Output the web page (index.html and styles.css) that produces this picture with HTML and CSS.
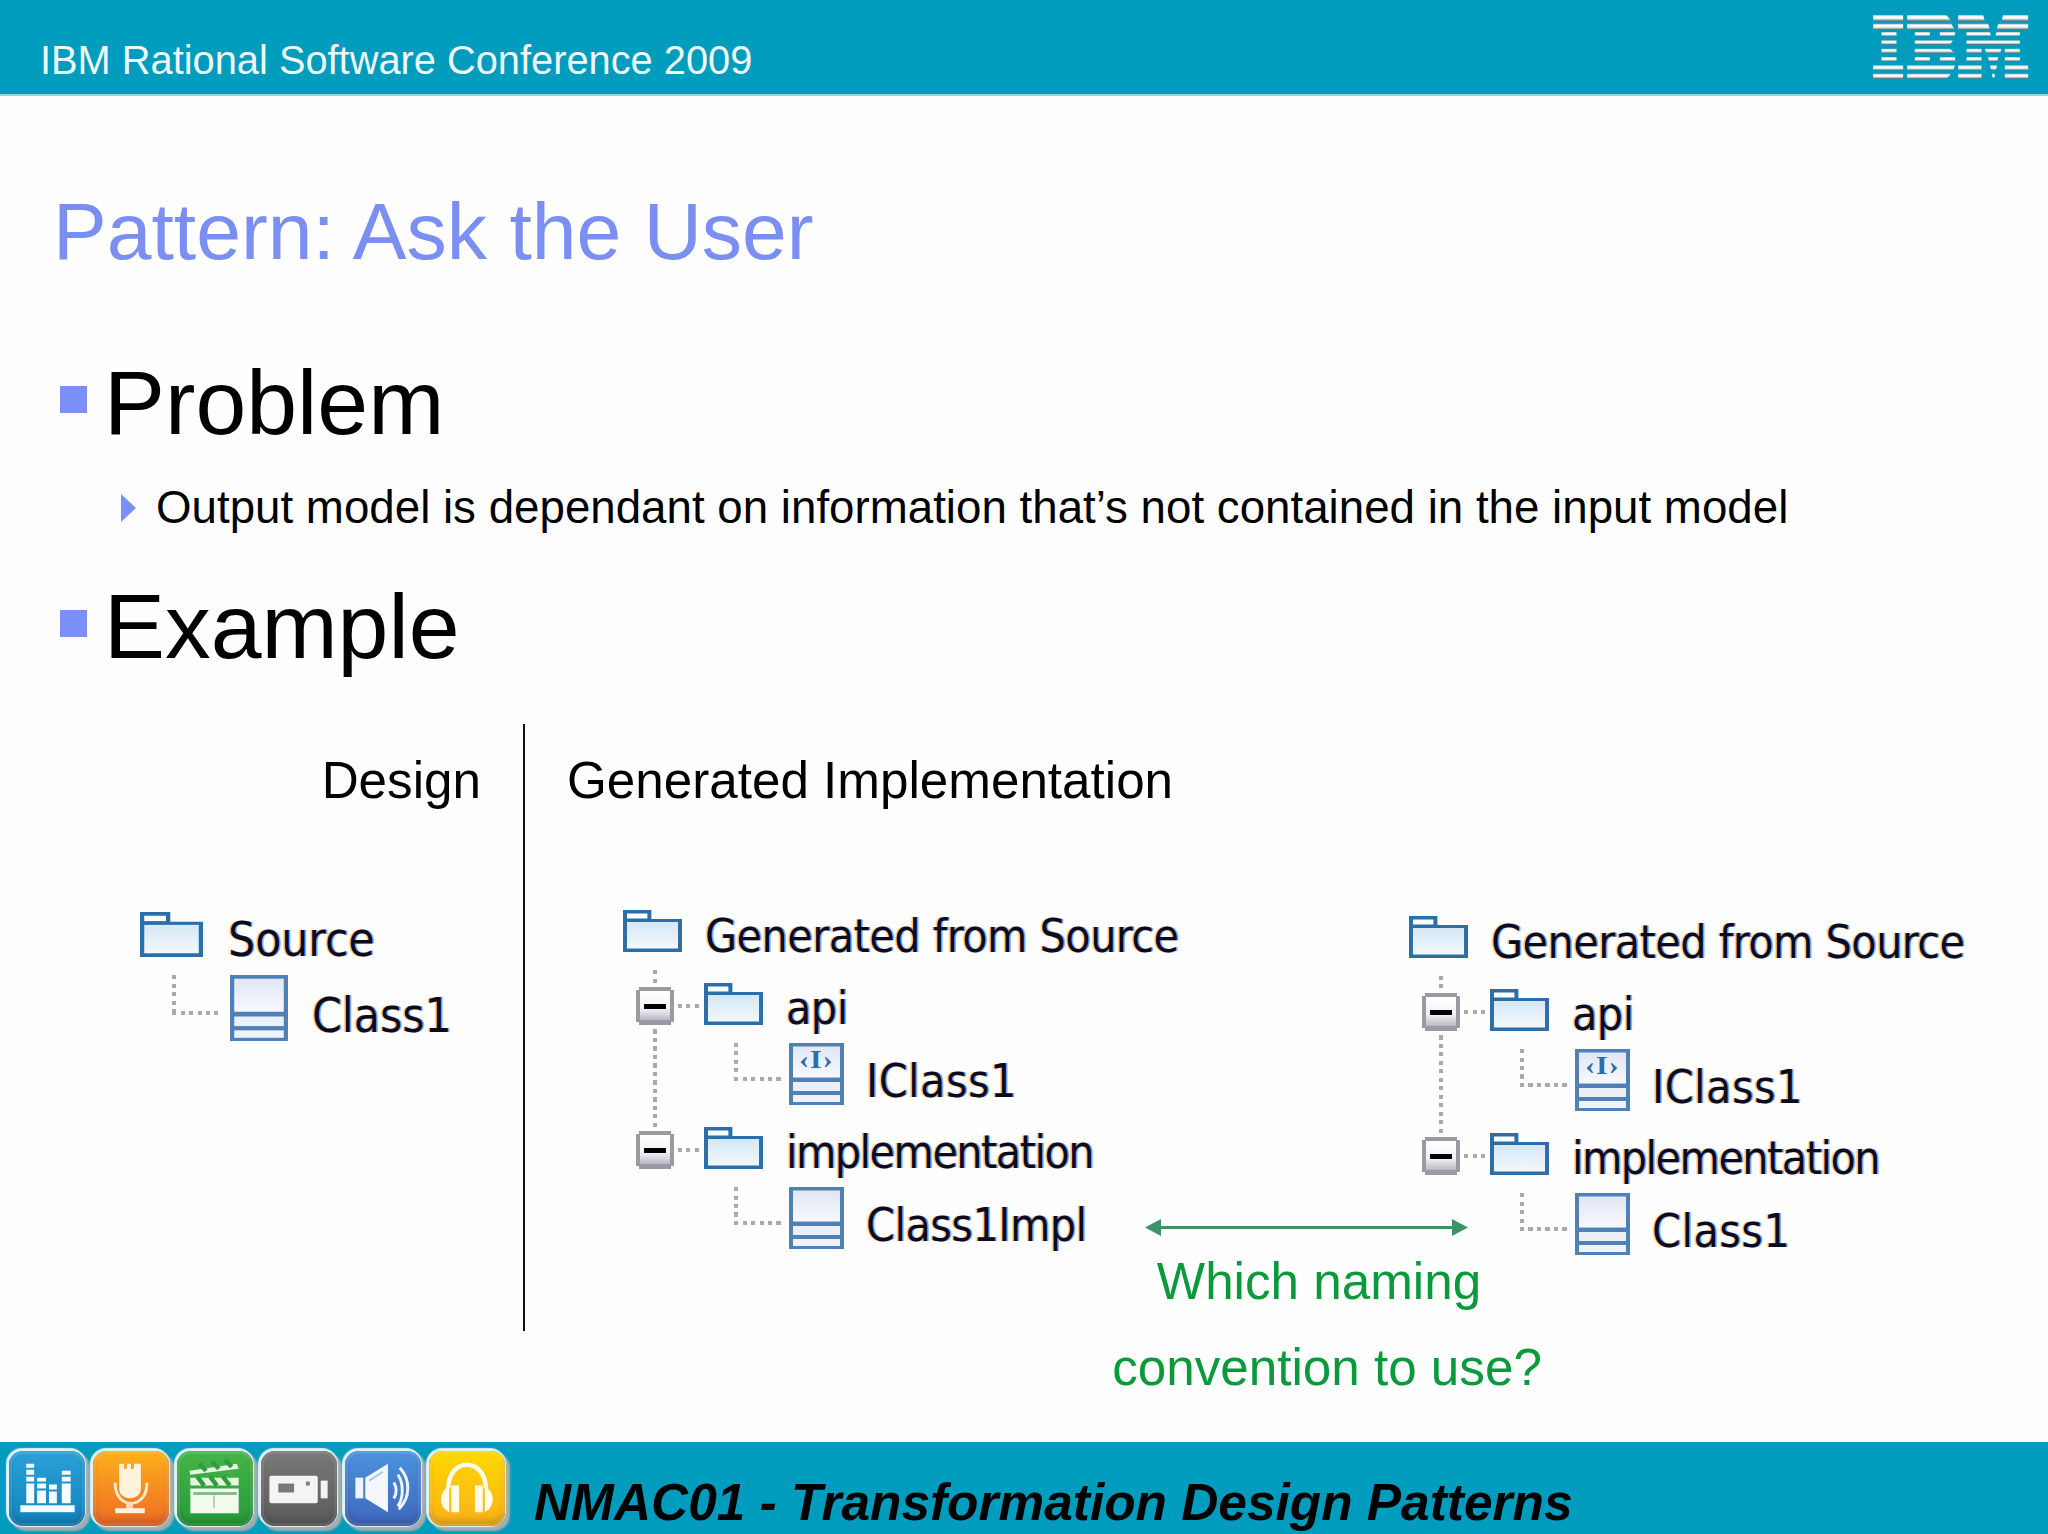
FILE: index.html
```html
<!DOCTYPE html>
<html lang="en">
<head>
<meta charset="utf-8">
<title>Pattern: Ask the User</title>
<link rel="stylesheet" href="styles.css">
</head>
<body>
<svg class="defs" width="0" height="0" aria-hidden="true">
  <defs>
    <linearGradient id="folderFill" x1="0" y1="0" x2="0" y2="1"><stop offset="0" stop-color="#d6e7f6"/><stop offset="1" stop-color="#f3f8fd"/></linearGradient>
    <linearGradient id="classFill" x1="0" y1="0" x2="0" y2="1"><stop offset="0" stop-color="#e1e6f3"/><stop offset="1" stop-color="#f8f9fe"/></linearGradient>
    <linearGradient id="minusFill" x1="0" y1="0" x2="0" y2="1"><stop offset="0" stop-color="#ffffff"/><stop offset=".6" stop-color="#f3f3f6"/><stop offset="1" stop-color="#b9b9c2"/></linearGradient>
    <linearGradient id="stripe" x1="0" y1="0" x2="0" y2="1"><stop offset="0" stop-color="#aebcc0"/><stop offset=".3" stop-color="#ffffff"/><stop offset=".6" stop-color="#eaf2f4"/><stop offset="1" stop-color="#5f6f74"/></linearGradient>
    <symbol id="folder" viewBox="0 0 52 42" preserveAspectRatio="none">
      <path d="M0 0H25V9H52V42H0Z" fill="#2b6ea8"/>
      <rect x="3.500" y="3.500" width="18" height="5" fill="#fff"/>
      <rect x="3.500" y="12" width="45" height="26.500" fill="url(#folderFill)"/>
    </symbol>
    <symbol id="class" viewBox="0 0 48 62" preserveAspectRatio="none">
      <rect width="48" height="62" fill="#4f80b6"/>
      <rect x="3.500" y="3.500" width="41" height="31" fill="url(#classFill)"/>
      <rect x="3.500" y="39" width="41" height="9" fill="#eaf0fa"/>
      <rect x="3.500" y="52" width="41" height="7" fill="#f0f3fb"/>
    </symbol>
    <symbol id="iface" viewBox="0 0 48 62" preserveAspectRatio="none">
      <rect width="48" height="62" fill="#4f80b6"/>
      <rect x="3.500" y="3.500" width="41" height="31" fill="url(#classFill)"/>
      <rect x="3.500" y="39" width="41" height="9" fill="#eaf0fa"/>
      <rect x="3.500" y="52" width="41" height="7" fill="#f0f3fb"/>
      <text x="24" y="25" class="iface-mark">‹I›</text>
    </symbol>
    <symbol id="minus" viewBox="0 0 38 38" preserveAspectRatio="none">
      <rect x="3" width="32" height="38" fill="#9a9aa5"/>
      <rect y="3" width="38" height="32" fill="#9a9aa5"/>
      <rect x="4" y="4" width="30" height="29" fill="url(#minusFill)"/>
      <rect x="8" y="17" width="22" height="5" fill="#000"/>
    </symbol>
  </defs>
</svg>

<div class="slide">
  <header class="topbar">
    <span class="conf">IBM Rational Software Conference 2009</span>
    <svg class="ibm" viewBox="220 44 470 192" role="img" aria-label="IBM">
      <g fill="url(#stripe)">
        <path d="M220 44h90v18h-90zM322 44h118l14 18h-132zM475 44h75l5 18h-80zM610 44h75v18h-80z"/>
        <path d="M220 70h90v18h-90zM322 70h132l11 18h-143zM475 70h90l5 18h-95zM595 70h90v18h-95z"/>
        <path d="M245 95h45v13h-45zM345 95h45v13h-45zM420 95h46l-2 13h-44zM500 95h70l4 13h-74zM590 95h70v13h-74z"/>
        <path d="M245 120h45v13h-45zM345 120h115l-10 13h-105zM500 120h160v13h-160z"/>
        <path d="M245 145h45v13h-45zM345 145h105l14 13h-119zM500 145h45v13h-45zM555 145h50l-4 13h-42zM615 145h45v13h-45z"/>
        <path d="M245 170h45v13h-45zM345 170h45v13h-45zM420 170h46v13h-46zM500 170h45v13h-45zM564 170h32l-4 13h-24zM615 170h45v13h-45z"/>
        <path d="M220 195h90v15h-90zM322 195h144l-6 15h-138zM475 195h70v15h-70zM570 195h22l-4 15h-14zM615 195h70v15h-70z"/>
        <path d="M220 220h90v15h-90zM322 220h132l-14 15h-118zM475 220h70v15h-70zM576 220h10l-3 15h-4zM615 220h70v15h-70z"/>
      </g>
    </svg>
  </header>

  <main class="content">
    <h1 class="title">Pattern: Ask the User</h1>
    <h2 class="bullet bullet-problem"><i class="square"></i>Problem</h2>
    <p class="sub"><i class="triangle"></i>Output model is dependant on information that’s not contained in the input model</p>
    <h2 class="bullet bullet-example"><i class="square"></i>Example</h2>

    <section class="diagram">
      <div class="col-design">
        <h3 class="heading heading-design">Design</h3>
        <div class="tree tree-lg">
          <div class="row row-root">
            <svg class="ic-folder"><use href="#folder"/></svg>
            <span class="label">Source</span>
          </div>
          <div class="row row-class">
            <i class="elbow"></i>
            <svg class="ic-class"><use href="#class"/></svg>
            <span class="label">Class1</span>
          </div>
        </div>
      </div>

      <div class="col-impl">
        <h3 class="heading heading-impl">Generated Implementation</h3>
        <div class="trees">
          <div class="tree">
            <i class="trunk"></i>
            <div class="row row-root">
              <svg class="ic-folder"><use href="#folder"/></svg>
              <span class="label">Generated from Source</span>
            </div>
            <div class="row row-folder row-first">
              <svg class="ic-minus"><use href="#minus"/></svg><i class="stub"></i>
              <svg class="ic-folder"><use href="#folder"/></svg>
              <span class="label">api</span>
            </div>
            <div class="row row-class">
              <i class="elbow"></i>
              <svg class="ic-class"><use href="#iface"/></svg>
              <span class="label label-wide">IClass1</span>
            </div>
            <div class="row row-folder">
              <svg class="ic-minus"><use href="#minus"/></svg><i class="stub"></i>
              <svg class="ic-folder"><use href="#folder"/></svg>
              <span class="label label-tight">implementation</span>
            </div>
            <div class="row row-class">
              <i class="elbow"></i>
              <svg class="ic-class"><use href="#class"/></svg>
              <span class="label">Class1Impl</span>
            </div>
          </div>

          <div class="tree tree-right">
            <i class="trunk"></i>
            <div class="row row-root">
              <svg class="ic-folder"><use href="#folder"/></svg>
              <span class="label">Generated from Source</span>
            </div>
            <div class="row row-folder row-first">
              <svg class="ic-minus"><use href="#minus"/></svg><i class="stub"></i>
              <svg class="ic-folder"><use href="#folder"/></svg>
              <span class="label">api</span>
            </div>
            <div class="row row-class">
              <i class="elbow"></i>
              <svg class="ic-class"><use href="#iface"/></svg>
              <span class="label label-wide">IClass1</span>
            </div>
            <div class="row row-folder">
              <svg class="ic-minus"><use href="#minus"/></svg><i class="stub"></i>
              <svg class="ic-folder"><use href="#folder"/></svg>
              <span class="label label-tight">implementation</span>
            </div>
            <div class="row row-class">
              <i class="elbow"></i>
              <svg class="ic-class"><use href="#class"/></svg>
              <span class="label label-wide">Class1</span>
            </div>
          </div>
        </div>

        <div class="callout">
          <svg class="arrow" viewBox="0 0 323 17">
            <rect x="14" y="7" width="295" height="3"/>
            <path d="M0 8.500L16 0V17ZM323 8.500L307 0V17Z"/>
          </svg>
          <p class="callout-line callout-first">Which naming</p>
          <p class="callout-line">convention to use?</p>
        </div>
      </div>
    </section>
  </main>

  <footer class="bottombar">
    <div class="apps">
      <div class="app app-eq">
        <svg viewBox="0 0 76 76"><g fill="#f6fbfe">
          <rect x="11" y="55" width="55" height="7"/>
          <path d="M17 13h8v4h-8zM17 19h8v5h-8zM17 26h8v5h-8zM17 33h8v20h-8z"/>
          <path d="M28 27h9v4h-9zM28 33h9v5h-9zM28 40h9v13h-9z"/>
          <path d="M40 34h8v5h-8zM40 41h8v12h-8z"/>
          <path d="M53 20h9v4h-9zM53 26h9v5h-9zM53 33h9v20h-9z"/>
        </g></svg>
      </div>
      <div class="app app-mic">
        <svg viewBox="0 0 76 76">
          <path d="M26 13h5v5h3v-5h4v5h3v-5h7v26a11 9 0 0 1-22 0Z" fill="#fff3dd"/>
          <path d="M22 32c-1 28 33 28 32 0" fill="none" stroke="#ffeccf" stroke-width="3"/>
          <rect x="33" y="52" width="7" height="7" fill="#ffd9a8"/>
          <rect x="22" y="58" width="30" height="5" fill="#fff3dd"/>
        </svg>
      </div>
      <div class="app app-clap">
        <svg viewBox="0 0 76 76">
          <path d="M12 20L60 13l2 5-49 6ZM13 27h49v8H13Z" fill="#e6f5e0"/>
          <path d="M13 38h49v25H13Z" fill="#f2faee"/>
          <path d="M22 13l7 7M35 11l7 7M48 9l7 7M20 26l7 9M33 26l7 9M46 26l7 9" stroke="#2f9c40" stroke-width="4.500"/>
          <path d="M16 43h44" stroke="#8ab98d" stroke-width="3" fill="none"/>
          <path d="M37 45v13" stroke="#9cc59e" stroke-width="1.500" fill="none"/>
        </svg>
      </div>
      <div class="app app-cam">
        <svg viewBox="0 0 76 76">
          <rect x="8" y="25" width="49" height="28" rx="2" fill="#f4f4f4"/>
          <rect x="17" y="33" width="16" height="9" fill="#77787a"/>
          <rect x="45" y="31" width="4" height="4" fill="#808080"/>
          <rect x="60" y="30" width="7" height="18" fill="#f4f4f4"/>
        </svg>
      </div>
      <div class="app app-spk">
        <svg viewBox="0 0 76 76">
          <rect x="10" y="27" width="8" height="21" fill="#eef4fc"/>
          <path d="M20 27L43 13v49L20 48Z" fill="#f4f8fd"/>
          <path d="M24 30l14-9" stroke="#a9c6ea" stroke-width="2"/>
          <path d="M49 32c3 5 3 11 0 16M53 24c6 8 6 24 0 32M55 17c11 12 11 30-1 42" fill="none" stroke="#eef4fc" stroke-width="3"/>
        </svg>
      </div>
      <div class="app app-head">
        <svg viewBox="0 0 76 76">
          <path d="M19 38C19 6 57 6 57 38" fill="none" stroke="#fffbe8" stroke-width="4.500"/>
          <path d="M20 36v26c-11-5-11-21 0-26ZM56 36c11 5 11 21 0 26Z" fill="#fffbe8"/>
          <path d="M22 35h8v27h-8zM46 35h8v27h-8z" fill="#fffbe8"/>
        </svg>
      </div>
    </div>
    <span class="session">NMAC01 - Transformation Design Patterns</span>
  </footer>
</div>
</body>
</html>
```
FILE: styles.css
```css
* { box-sizing: border-box; }

html, body { margin: 0; padding: 0; background: #fff; }

body { font-family: "Liberation Sans", Arial, sans-serif; color: #000; }

.defs { display: block; height: 0; }

.slide {
  width: 2048px;
  height: 1534px;
  display: flex;
  flex-direction: column;
  overflow: hidden;
  background: #fefefe;
}

/* Top bar */
.topbar {
  flex: none;
  height: 94px;
  padding: 26px 18px 0 40px;
  background: #009cbd;
  box-shadow: 0 2px 0 #8fd6e2;
  display: flex;
  align-items: center;
  justify-content: space-between;
}

.conf { font-size: 39.800px; color: #eef8fb; line-height: 46px; }

.ibm { width: 157px; height: 64px; margin-top: -26px; flex: none; filter: blur(.5px); }

/* Main */
.content { flex: 1; padding-top: 87px; }

.title {
  margin: 0 0 0 53px;
  font-weight: 400;
  font-size: 80.500px;
  line-height: 100px;
  color: #7b8ff2;
}

.bullet {
  margin: 0 0 0 60px;
  display: flex;
  align-items: center;
  font-weight: 400;
  font-size: 91.400px;
  line-height: 100px;
}

.bullet-problem { margin-top: 71px; }
.bullet-example { margin-top: 40px; }

.square {
  flex: none;
  width: 27px;
  height: 27px;
  margin-right: 17px;
  background: #7b8ff8;
  transform: translateY(-3px);
}

.sub {
  margin: 28px 0 0 121px;
  display: flex;
  align-items: center;
  font-size: 45.700px;
  line-height: 56px;
}

.triangle {
  flex: none;
  width: 0;
  height: 0;
  margin-right: 20px;
  border-left: 15px solid #7b8ff8;
  border-top: 14px solid transparent;
  border-bottom: 14px solid transparent;
}

/* Diagram */
.diagram {
  margin-top: 48px;
  height: 607px;
  display: flex;
}

.col-design { flex: none; width: 525px; border-right: 2px solid #111; }

.col-impl { flex: 1; position: relative; }

.heading {
  margin: 0;
  padding-top: 27px;
  font-weight: 400;
  font-size: 51.200px;
  line-height: 60px;
}

.heading-design { text-align: right; padding-right: 42px; }
.heading-impl { padding-left: 42px; }

.trees { display: flex; margin: 99px 0 0 98px; }

/* Tree views */
.tree {
  position: relative;
  flex: none;
  width: 500px;
  font-family: "DejaVu Sans", sans-serif;
  font-stretch: condensed;
  font-size: 46px;
  letter-spacing: -.5px;
  color: #0b0b20;
}

.tree-right { margin: 6px 0 0 286px; }

.tree-lg { margin: 101px 0 0 140px; width: 360px; font-size: 47.500px; letter-spacing: 0; }

.row { position: relative; display: flex; align-items: flex-end; }

.row-root { height: 42px; }
.row-folder { height: 42px; padding-left: 81px; margin-top: 22px; }
.row-first { margin-top: 31px; }
.row-class { height: 62px; padding-left: 166px; margin-top: 18px; }

.ic-folder { flex: none; width: 59px; height: 42px; }
.ic-class { flex: none; width: 55px; height: 62px; }
.ic-minus { position: absolute; left: 13px; top: 4px; width: 38px; height: 38px; }

.iface-mark {
  font-family: "Liberation Serif", serif;
  font-weight: 700;
  font-size: 26px;
  letter-spacing: 1px;
  text-anchor: middle;
  fill: #2b6ea8;
}

.label {
  line-height: 50px;
  white-space: nowrap;
  text-shadow: -1.500px 0 rgba(255, 176, 70, .6), 1.500px 0 rgba(50, 110, 240, .6);
}

.label-tight { letter-spacing: -1.500px; }
.label-wide { letter-spacing: .5px; }

.row-root .label { margin: 0 0 -9px 23px; }
.row-folder .label { margin: 0 0 -8px 23px; }
.row-class .label { margin: 0 0 -1px 22px; }

.tree-lg .ic-folder { width: 63px; height: 45px; }
.tree-lg .ic-class { width: 58px; height: 66px; }
.tree-lg .row-root { height: 45px; }
.tree-lg .row-root .label { margin: 0 0 -8px 25px; }
.tree-lg .row-class { height: 66px; padding-left: 90px; margin-top: 18px; }
.tree-lg .row-class .label { margin: 0 0 0 24px; }
.tree-lg .elbow { left: 32px; top: 0; width: 46px; height: 40px; }

.trunk {
  position: absolute;
  left: 30px;
  top: 60px;
  width: 4px;
  height: 158px;
  background: repeating-linear-gradient(to bottom, #aaa 0 4px, transparent 4px 8.500px);
}

.stub {
  position: absolute;
  left: 55px;
  top: 21px;
  width: 24px;
  height: 4px;
  background: repeating-linear-gradient(to right, #aaa 0 4px, transparent 4px 8.500px);
}

.elbow {
  position: absolute;
  left: 111px;
  top: 0;
  width: 47px;
  height: 38px;
  background:
    repeating-linear-gradient(to bottom, #aaa 0 4px, transparent 4px 8.500px) left top / 4px 100% no-repeat,
    repeating-linear-gradient(to right, #aaa 0 4px, transparent 4px 8.500px) left bottom / 100% 4px no-repeat;
}

/* Callout */
.callout {
  position: absolute;
  left: 587px;
  top: 495px;
  width: 430px;
  text-align: center;
  color: #0a9a3c;
}

.arrow { display: block; width: 323px; height: 17px; margin: 0 0 2px 33px; fill: #3b9468; }

.callout-line { margin: 0; font-size: 51.200px; line-height: 87px; white-space: nowrap; }
.callout-line + .callout-line { margin-top: -1px; }
.callout-first { padding-right: 16px; }

/* Bottom bar */
.bottombar {
  flex: none;
  height: 92px;
  padding: 9px 0 0 9px;
  background: #009cbd;
  display: flex;
  align-items: flex-start;
}

.apps { display: flex; gap: 8px; flex: none; }

.app {
  width: 76px;
  height: 75px;
  border-radius: 14px;
  filter: blur(.6px);
  box-shadow:
    -1px -1px 1px 2px #e6f1f3,
    3px 3px 2px 2px #a3adaf,
    inset 0 0 0 3px rgba(255, 255, 255, .1),
    inset 0 -6px 6px rgba(0, 0, 0, .16);
}

.app svg { display: block; width: 100%; height: 100%; }

.app-eq { background: linear-gradient(#2ba0d8, #1482bb); }
.app-mic { background: linear-gradient(#fdb01a, #ee6a26); }
.app-clap { background: linear-gradient(#46b548, #279a3a); }
.app-cam { background: linear-gradient(#797979, #5a5a5a); }
.app-spk { background: linear-gradient(#4b92dc, #3f67bd); }
.app-head { background: linear-gradient(#ffd800, #f9b01a); }

.session {
  margin: 21px 0 0 29px;
  font-size: 51.400px;
  line-height: 60px;
  font-weight: 700;
  font-style: italic;
  white-space: nowrap;
}
```
